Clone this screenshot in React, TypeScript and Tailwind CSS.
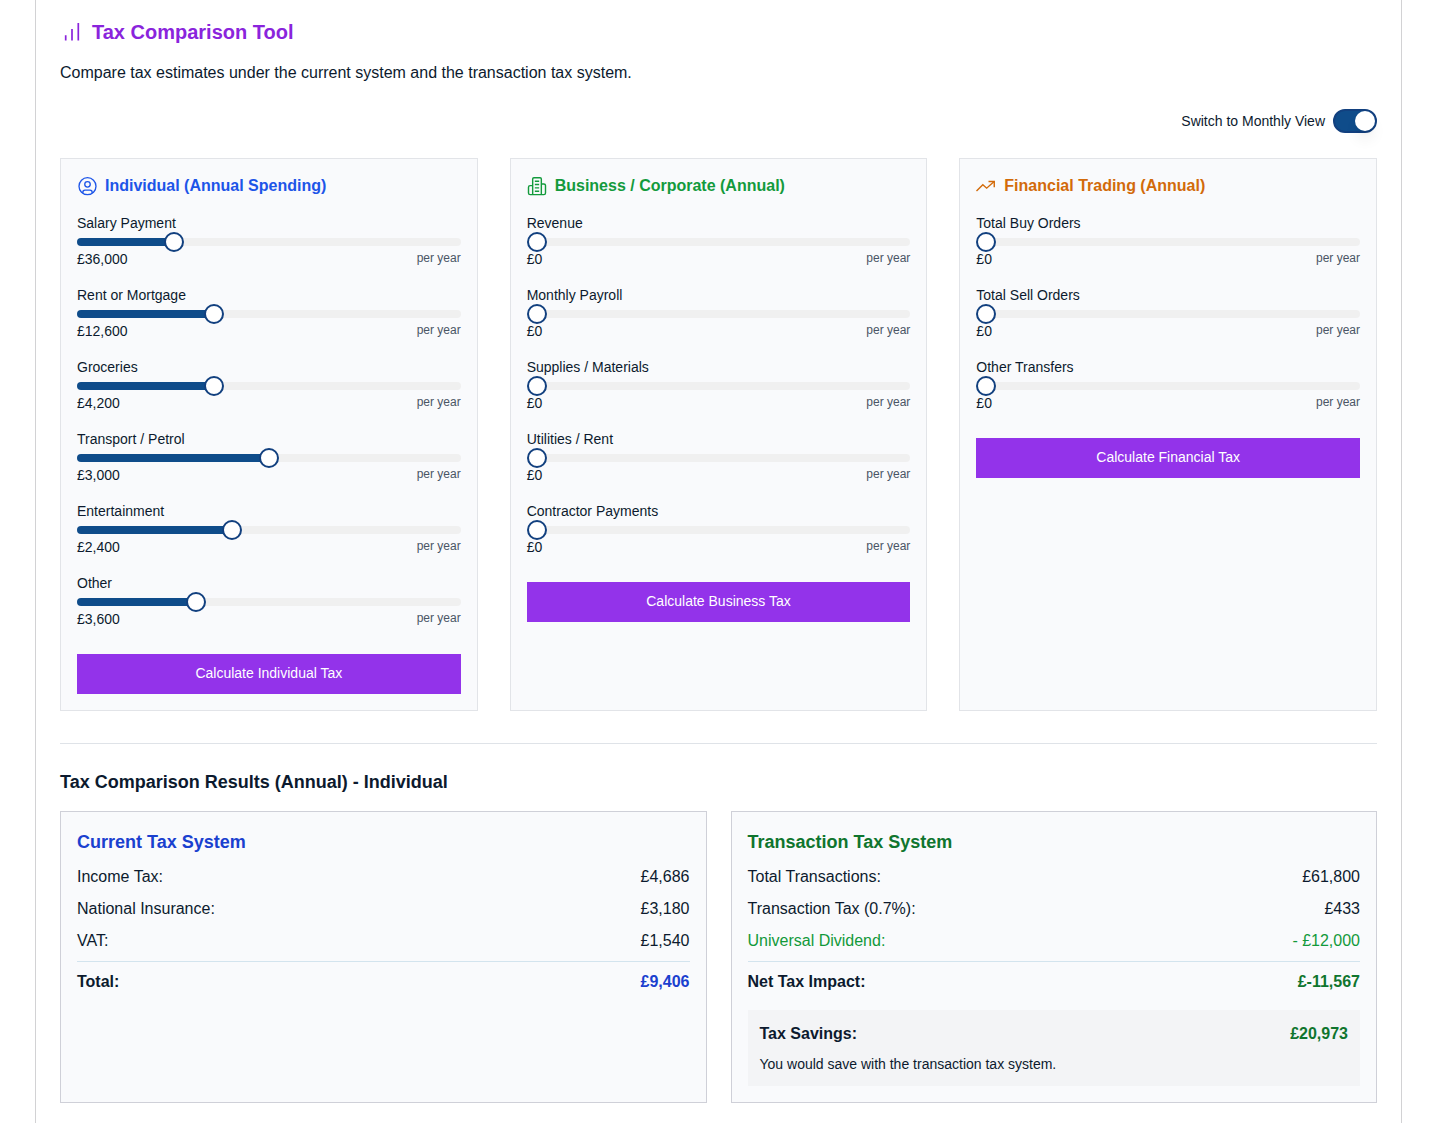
import { useState } from "react";

type Field = { label: string; value: number; max: number };

const individual: Field[] = [
  { label: "Salary Payment", value: 36000, max: 150000 },
  { label: "Rent or Mortgage", value: 12600, max: 36000 },
  { label: "Groceries", value: 4200, max: 12000 },
  { label: "Transport / Petrol", value: 3000, max: 6000 },
  { label: "Entertainment", value: 2400, max: 6000 },
  { label: "Other", value: 3600, max: 12000 },
];

const business: Field[] = [
  { label: "Revenue", value: 0, max: 1000000 },
  { label: "Monthly Payroll", value: 0, max: 600000 },
  { label: "Supplies / Materials", value: 0, max: 240000 },
  { label: "Utilities / Rent", value: 0, max: 120000 },
  { label: "Contractor Payments", value: 0, max: 240000 },
];

const trading: Field[] = [
  { label: "Total Buy Orders", value: 0, max: 1000000 },
  { label: "Total Sell Orders", value: 0, max: 1000000 },
  { label: "Other Transfers", value: 0, max: 1000000 },
];

function ChartIcon() {
  return (
    <svg width="24" height="24" viewBox="0 0 24 24" fill="none" stroke="currentColor" strokeWidth="1.7">
      <path d="M5.7 15.2v5.400M12 9v11.600M18.300 3v17.600" />
    </svg>
  );
}

function UserIcon() {
  return (
    <svg width="20" height="20" viewBox="0 0 24 24" fill="none" stroke="currentColor" strokeWidth="1.6">
      <circle cx="12.6" cy="12.2" r="10.2" />
      <circle cx="12.6" cy="10" r="3.3" />
      <path d="M7 20.600v-1a2.600 2.600 0 0 1 2.600-2.600h6a2.600 2.600 0 0 1 2.600 2.600v1" />
    </svg>
  );
}

function BuildingIcon() {
  return (
    <svg width="20" height="20" viewBox="0 0 24 24" fill="none" stroke="currentColor" strokeWidth="1.7" strokeLinejoin="round">
      <path d="M6.800 22.300V3.500a1.500 1.500 0 0 1 1.500-1.500h7.400a1.500 1.500 0 0 1 1.500 1.500v18.800" />
      <path d="M6.800 11.500H3.800a2 2 0 0 0-2 2v6.800a2 2 0 0 0 2 2h16.400a2 2 0 0 0 2-2v-8.800a2 2 0 0 0-2-2h-3" />
      <path d="M9.400 6.200h5.200M9.400 10.200h5.200M9.400 14.200h5.200M9.400 18.200h5.200" />
    </svg>
  );
}

function TrendIcon() {
  return (
    <svg width="20" height="20" viewBox="0 0 24 24" fill="none" stroke="currentColor" strokeWidth="1.7">
      <path d="M0.600 18l7.600-7.600 4.600 4.200 9-8" />
      <path d="M15 6.600h6.900v6.900" />
    </svg>
  );
}

function SliderField({ field }: { field: Field }) {
  const [value, setValue] = useState(field.value);
  const id = field.label.toLowerCase().replace(/[^a-z]+/g, "-");
  const pct = (value / field.max) * 100;

  return (
    <div>
      <label htmlFor={id} className="block text-sm leading-5">
        {field.label}
      </label>
      <div className="flex h-[18px] items-center">
        <input
          id={id}
          type="range"
          min={0}
          max={field.max}
          step={100}
          value={value}
          onChange={(e) => setValue(Number(e.target.value))}
          style={{ backgroundImage: `linear-gradient(to right, #0f4c8a ${pct}%, #f0f0f0 ${pct}%)` }}
          className="h-2 w-full cursor-pointer appearance-none rounded-full [&::-webkit-slider-thumb]:h-5 [&::-webkit-slider-thumb]:w-5 [&::-webkit-slider-thumb]:appearance-none [&::-webkit-slider-thumb]:rounded-full [&::-webkit-slider-thumb]:border-2 [&::-webkit-slider-thumb]:border-[#12407f] [&::-webkit-slider-thumb]:bg-white"
        />
      </div>
      <div className="flex justify-between">
        <span className="text-sm leading-4">£{value.toLocaleString("en-GB")}</span>
        <span className="text-xs leading-[14px] text-gray-600">per year</span>
      </div>
    </div>
  );
}

type PanelProps = {
  title: string;
  color: string;
  icon: React.ReactNode;
  fields: Field[];
  button: string;
};

function Panel({ title, color, icon, fields, button }: PanelProps) {
  return (
    <section className="border border-[#e2e4e8] bg-[#f9fafc] p-4">
      <h3 className={`flex items-center gap-2 text-base leading-[22px] font-bold ${color}`}>
        {icon}
        {title}
      </h3>
      <div className="mt-4 flex flex-col gap-[18px]">
        {fields.map((f) => (
          <SliderField key={f.label} field={f} />
        ))}
      </div>
      <button type="button" className="mt-[27px] h-10 w-full bg-[#9333ea] pb-0.5 text-sm text-white">
        {button}
      </button>
    </section>
  );
}

function Row({ label, value, className = "" }: { label: string; value: string; className?: string }) {
  return (
    <div className={`flex justify-between ${className}`}>
      <span>{label}</span>
      <span>{value}</span>
    </div>
  );
}

export default function App() {
  const [annual, setAnnual] = useState(true);

  return (
    <div className="min-h-screen bg-white pr-[54px] pl-[35px] font-['Liberation_Sans',Arial,sans-serif] text-[#0c1a2e]">
      <main className="min-h-screen border-x border-[#d2d2d4] px-6 pt-[18px] pb-5">
        <h1 className="flex items-center gap-2 text-xl leading-7 font-bold text-[#8a24dc]">
          <ChartIcon />
          Tax Comparison Tool
        </h1>
        <p className="mt-[15px] leading-6">
          Compare tax estimates under the current system and the transaction tax system.
        </p>

        <label className="mt-6 flex cursor-pointer items-center justify-end gap-2 text-sm">
          Switch to Monthly View
          <input
            type="checkbox"
            role="switch"
            checked={annual}
            onChange={(e) => setAnnual(e.target.checked)}
            className="peer sr-only"
          />
          <span className="flex h-6 w-11 rounded-full border-2 border-transparent bg-gray-300 peer-checked:justify-end peer-checked:border-[#12407f] peer-checked:bg-[#0f4c8a]">
            <span className="h-5 w-5 rounded-full bg-white shadow-lg" />
          </span>
        </label>

        {/* Inputs */}
        <div className="mt-[25px] grid grid-cols-3 gap-8">
          <Panel
            title="Individual (Annual Spending)"
            color="text-[#1d55e8]"
            icon={<UserIcon />}
            fields={individual}
            button="Calculate Individual Tax"
          />
          <Panel
            title="Business / Corporate (Annual)"
            color="text-[#139a3c]"
            icon={<BuildingIcon />}
            fields={business}
            button="Calculate Business Tax"
          />
          <Panel
            title="Financial Trading (Annual)"
            color="text-[#d26a0a]"
            icon={<TrendIcon />}
            fields={trading}
            button="Calculate Financial Tax"
          />
        </div>

        {/* Results */}
        <section className="mt-8 border-t border-[#dfe3e8] pt-6">
          <h2 className="text-lg leading-7 font-bold">Tax Comparison Results (Annual) - Individual</h2>
          <div className="mt-[15px] grid grid-cols-2 gap-6">
            <div className="border border-[#cfd0d8] bg-[#f9fafc] p-4">
              <h3 className="text-lg leading-7 font-bold text-[#1a40cf]">Current Tax System</h3>
              <div className="mt-[9px] flex flex-col gap-2">
                <Row label="Income Tax:" value="£4,686" />
                <Row label="National Insurance:" value="£3,180" />
                <Row label="VAT:" value="£1,540" />
                <div className="flex justify-between border-t border-[#d3e4ee] pt-2 font-bold">
                  <span>Total:</span>
                  <span className="text-[#1a40cf]">£9,406</span>
                </div>
              </div>
            </div>

            <div className="border border-[#cfd0d8] bg-[#f9fafc] p-4">
              <h3 className="text-lg leading-7 font-bold text-[#0f752e]">Transaction Tax System</h3>
              <div className="mt-[9px] flex flex-col gap-2">
                <Row label="Total Transactions:" value="£61,800" />
                <Row label="Transaction Tax (0.7%):" value="£433" />
                <Row label="Universal Dividend:" value="- £12,000" className="text-[#12993a]" />
                <div className="flex justify-between border-t border-[#d3e4ee] pt-2 font-bold">
                  <span>Net Tax Impact:</span>
                  <span className="text-[#0f752e]">£-11,567</span>
                </div>
              </div>
              <div className="mt-4 bg-[#f3f4f6] p-3">
                <div className="flex justify-between font-bold">
                  <span>Tax Savings:</span>
                  <span className="text-[#0f752e]">£20,973</span>
                </div>
                <p className="mt-2 text-sm">You would save with the transaction tax system.</p>
              </div>
            </div>
          </div>
        </section>
      </main>
    </div>
  );
}
